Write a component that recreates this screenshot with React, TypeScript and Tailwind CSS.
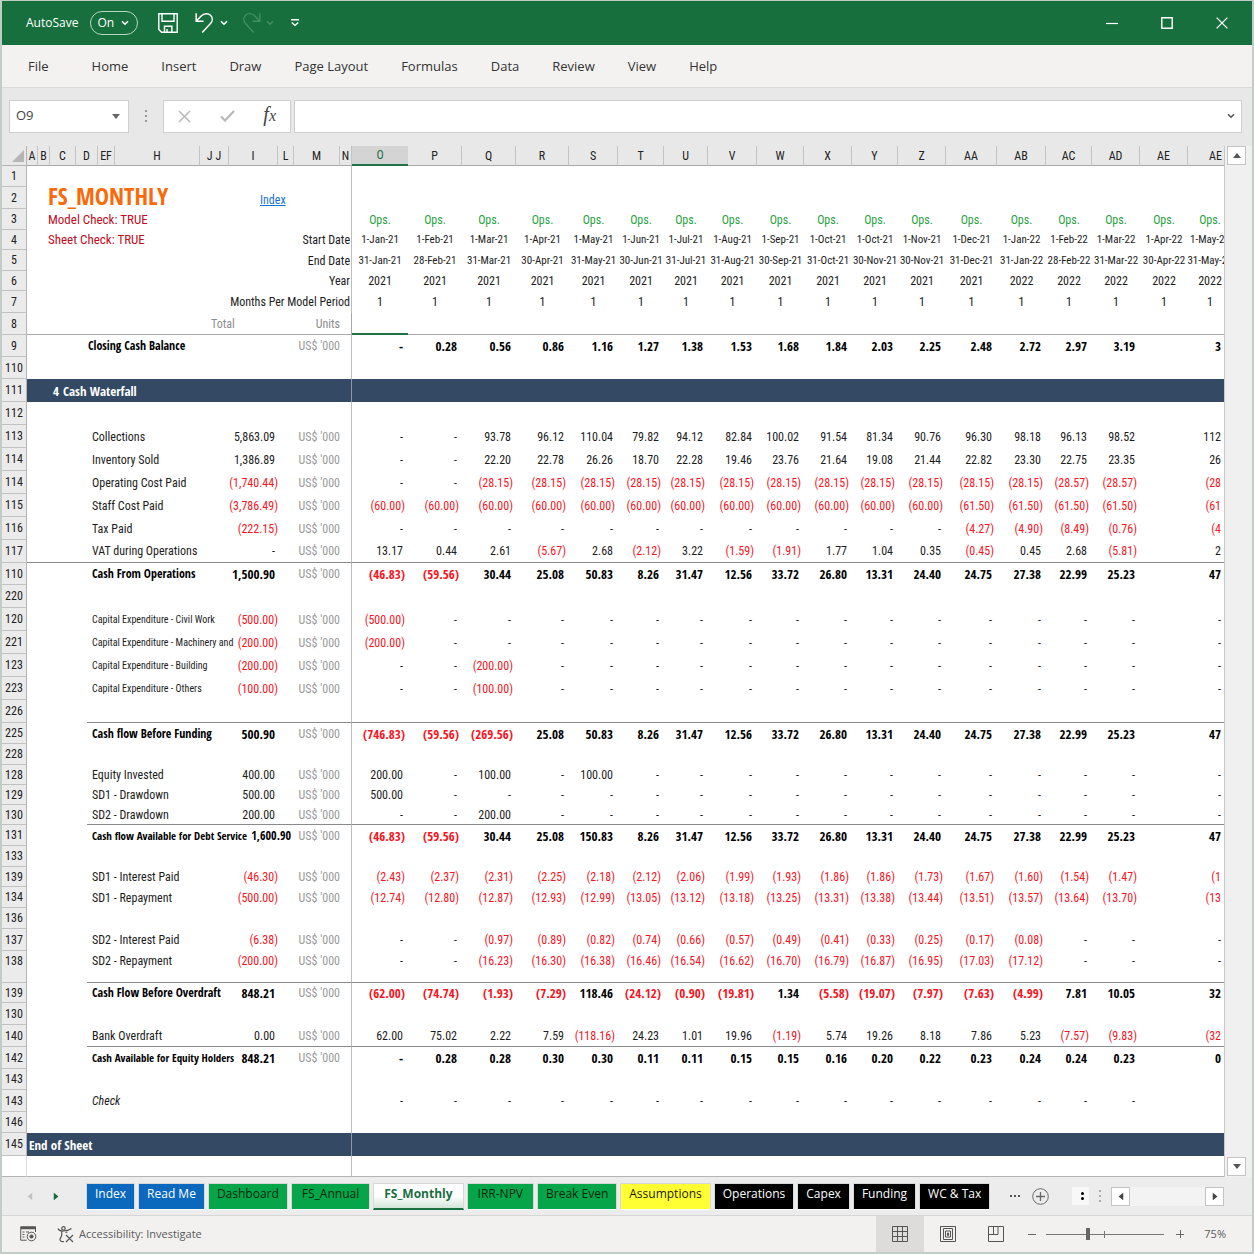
import { Fragment } from "react";

const columns = [
    { name: "A", span: 1 }, { name: "B", span: 1 }, { name: "C", span: 1 }, { name: "D", span: 2 },
    { name: "EF", span: 1 }, { name: "H", span: 1 }, { name: "J J", span: 1 }, { name: "I", span: 1 },
    { name: "L", span: 1 }, { name: "M", span: 1 }, { name: "N", span: 1 },
];

const months = [
    { col: "O", start: "1-Jan-21", end: "31-Jan-21", year: 2021 },
    { col: "P", start: "1-Feb-21", end: "28-Feb-21", year: 2021 },
    { col: "Q", start: "1-Mar-21", end: "31-Mar-21", year: 2021 },
    { col: "R", start: "1-Apr-21", end: "30-Apr-21", year: 2021 },
    { col: "S", start: "1-May-21", end: "31-May-21", year: 2021 },
    { col: "T", start: "1-Jun-21", end: "30-Jun-21", year: 2021 },
    { col: "U", start: "1-Jul-21", end: "31-Jul-21", year: 2021 },
    { col: "V", start: "1-Aug-21", end: "31-Aug-21", year: 2021 },
    { col: "W", start: "1-Sep-21", end: "30-Sep-21", year: 2021 },
    { col: "X", start: "1-Oct-21", end: "31-Oct-21", year: 2021 },
    { col: "Y", start: "1-Oct-21", end: "30-Nov-21", year: 2021 },
    { col: "Z", start: "1-Nov-21", end: "30-Nov-21", year: 2021 },
    { col: "AA", start: "1-Dec-21", end: "31-Dec-21", year: 2021 },
    { col: "AB", start: "1-Jan-22", end: "31-Jan-22", year: 2022 },
    { col: "AC", start: "1-Feb-22", end: "28-Feb-22", year: 2022 },
    { col: "AD", start: "1-Mar-22", end: "31-Mar-22", year: 2022 },
    { col: "AE", start: "1-Apr-22", end: "30-Apr-22", year: 2022 },
    { col: "AE", start: "1-May-22", end: "31-May-22", year: 2022 },
];

// values run from column O, "_" leaves a cell empty
const rows = [
    { n: "9", h: "h-[22px]", label: "Closing Cash Balance", outdent: true, bold: true, values: "- 0.28 0.56 0.86 1.16 1.27 1.38 1.53 1.68 1.84 2.03 2.25 2.48 2.72 2.97 3.19 _ 3" },
    { n: "110", h: "h-[22px]" },
    { n: "111", h: "h-[23px]", band: "Cash Waterfall", no: "4" },
    { n: "112", h: "h-[23px]" },
    { n: "113", h: "h-[23px]", label: "Collections", total: "5,863.09", values: "- - 93.78 96.12 110.04 79.82 94.12 82.84 100.02 91.54 81.34 90.76 96.30 98.18 96.13 98.52 _ 112" },
    { n: "114", h: "h-[23px]", label: "Inventory Sold", total: "1,386.89", values: "- - 22.20 22.78 26.26 18.70 22.28 19.46 23.76 21.64 19.08 21.44 22.82 23.30 22.75 23.35 _ 26" },
    { n: "114", h: "h-[23px]", label: "Operating Cost Paid", total: "(1,740.44)", values: "- - (28.15) (28.15) (28.15) (28.15) (28.15) (28.15) (28.15) (28.15) (28.15) (28.15) (28.15) (28.15) (28.57) (28.57) _ (28" },
    { n: "115", h: "h-[23px]", label: "Staff Cost Paid", total: "(3,786.49)", values: "(60.00) (60.00) (60.00) (60.00) (60.00) (60.00) (60.00) (60.00) (60.00) (60.00) (60.00) (60.00) (61.50) (61.50) (61.50) (61.50) _ (61" },
    { n: "116", h: "h-[23px]", label: "Tax Paid", total: "(222.15)", values: "- - - - - - - - - - - - (4.27) (4.90) (8.49) (0.76) _ (4" },
    { n: "117", h: "h-[23px]", label: "VAT during Operations", total: "-", line: "full", values: "13.17 0.44 2.61 (5.67) 2.68 (2.12) 3.22 (1.59) (1.91) 1.77 1.04 0.35 (0.45) 0.45 2.68 (5.81) _ 2" },
    { n: "110", h: "h-[22px]", label: "Cash From Operations", total: "1,500.90", bold: true, values: "(46.83) (59.56) 30.44 25.08 50.83 8.26 31.47 12.56 33.72 26.80 13.31 24.40 24.75 27.38 22.99 25.23 _ 47" },
    { n: "220", h: "h-[23px]" },
    { n: "120", h: "h-[23px]", label: "Capital Expenditure - Civil Work", small: true, total: "(500.00)", values: "(500.00) - - - - - - - - - - - - - - - _ -" },
    { n: "221", h: "h-[23px]", label: "Capital Expenditure - Machinery and", small: true, total: "(200.00)", values: "(200.00) - - - - - - - - - - - - - - - _ -" },
    { n: "123", h: "h-[23px]", label: "Capital Expenditure - Building", small: true, total: "(200.00)", values: "- - (200.00) - - - - - - - - - - - - - _ -" },
    { n: "223", h: "h-[23px]", label: "Capital Expenditure - Others", small: true, total: "(100.00)", values: "- - (100.00) - - - - - - - - - - - - - _ -" },
    { n: "226", h: "h-[23px]", line: "part" },
    { n: "225", h: "h-[21px]", label: "Cash flow Before Funding", total: "500.90", bold: true, values: "(746.83) (59.56) (269.56) 25.08 50.83 8.26 31.47 12.56 33.72 26.80 13.31 24.40 24.75 27.38 22.99 25.23 _ 47" },
    { n: "228", h: "h-[21px]" },
    { n: "128", h: "h-[20px]", label: "Equity Invested", total: "400.00", values: "200.00 - 100.00 - 100.00 - - - - - - - - - - - _ -" },
    { n: "129", h: "h-[20px]", label: "SD1 - Drawdown", total: "500.00", values: "500.00 - - - - - - - - - - - - - - - _ -" },
    { n: "130", h: "h-[20px]", label: "SD2 - Drawdown", total: "200.00", line: "part", values: "- - 200.00 - - - - - - - - - - - - - _ -" },
    { n: "131", h: "h-[21px]", label: "Cash flow Available for Debt Service", total: "1,600.90", wide: true, small: true, bold: true, values: "(46.83) (59.56) 30.44 25.08 150.83 8.26 31.47 12.56 33.72 26.80 13.31 24.40 24.75 27.38 22.99 25.23 _ 47" },
    { n: "133", h: "h-[21px]" },
    { n: "139", h: "h-[20px]", label: "SD1 - Interest Paid", total: "(46.30)", values: "(2.43) (2.37) (2.31) (2.25) (2.18) (2.12) (2.06) (1.99) (1.93) (1.86) (1.86) (1.73) (1.67) (1.60) (1.54) (1.47) _ (1" },
    { n: "134", h: "h-[21px]", label: "SD1 - Repayment", total: "(500.00)", values: "(12.74) (12.80) (12.87) (12.93) (12.99) (13.05) (13.12) (13.18) (13.25) (13.31) (13.38) (13.44) (13.51) (13.57) (13.64) (13.70) _ (13" },
    { n: "136", h: "h-[21px]" },
    { n: "137", h: "h-[22px]", label: "SD2 - Interest Paid", total: "(6.38)", values: "- - (0.97) (0.89) (0.82) (0.74) (0.66) (0.57) (0.49) (0.41) (0.33) (0.25) (0.17) (0.08) - - _ -" },
    { n: "138", h: "h-[32px]", label: "SD2 - Repayment", total: "(200.00)", tall: true, line: "part", values: "- - (16.23) (16.30) (16.38) (16.46) (16.54) (16.62) (16.70) (16.79) (16.87) (16.95) (17.03) (17.12) - - _ -" },
    { n: "139", h: "h-[20px]", label: "Cash Flow Before Overdraft", total: "848.21", bold: true, values: "(62.00) (74.74) (1.93) (7.29) 118.46 (24.12) (0.90) (19.81) 1.34 (5.58) (19.07) (7.97) (7.63) (4.99) 7.81 10.05 _ 32" },
    { n: "130", h: "h-[22px]" },
    { n: "140", h: "h-[22px]", label: "Bank Overdraft", total: "0.00", line: "part", values: "62.00 75.02 2.22 7.59 (118.16) 24.23 1.01 19.96 (1.19) 5.74 19.26 8.18 7.86 5.23 (7.57) (9.83) _ (32" },
    { n: "142", h: "h-[22px]", label: "Cash Available for Equity Holders", total: "848.21", small: true, bold: true, values: "- 0.28 0.28 0.30 0.30 0.11 0.11 0.15 0.15 0.16 0.20 0.22 0.23 0.24 0.24 0.23 _ 0" },
    { n: "143", h: "h-[21px]" },
    { n: "143", h: "h-[22px]", label: "Check", italic: true, noUnit: true, values: "- - - - - - - - - - - - - - - - _ _" },
    { n: "146", h: "h-[21px]" },
    { n: "145", h: "h-[23px]", band: "End of Sheet" },
];

const tabs = [
    { name: "Index", style: "px-2 bg-[#0a68bd] text-white" },
    { name: "Read Me", style: "px-2 bg-[#0a68bd] text-white" },
    { name: "Dashboard", style: "px-2 bg-[#06a549] text-[#06280f]" },
    { name: "FS_Annual", style: "px-2.5 bg-[#06a549] text-[#06280f]" },
    { name: "FS_Monthly", active: true, style: "px-2.5 bg-linear-to-b from-white from-50% to-[#cfe6d8] text-[#1a6e40] font-bold" },
    { name: "IRR-NPV", style: "px-2.5 bg-[#06a549] text-[#06280f]" },
    { name: "Break Even", style: "px-2 bg-[#06a549] text-[#06280f]" },
    { name: "Assumptions", style: "px-2 bg-[#ffff33] text-[#1c1c08]" },
    { name: "Operations", style: "px-2 bg-black text-white" },
    { name: "Capex", style: "px-2 bg-black text-white" },
    { name: "Funding", style: "px-2 bg-black text-white" },
    { name: "WC & Tax", style: "px-2 bg-black text-white" },
];

const menu = ["File", "Home", "Insert", "Draw", "Page Layout", "Formulas", "Data", "Review", "View", "Help"];

const strong = "font-['Open_Sans_Condensed','Open_Sans',sans-serif] font-bold";

function Chevron({ className = "" }) {
    return (
        <svg viewBox="0 0 8 6" className={`h-[6px] w-2 ${className}`} fill="none" stroke="currentColor" strokeWidth="1.6">
            <path d="M1 1.2 4 4.2 7 1.2" />
        </svg>
    );
}

function Triangle({ className = "" }) {
    return (
        <svg viewBox="0 0 8 5" className={`h-[5px] w-2 ${className}`} fill="currentColor">
            <path d="M0 0h8L4 5z" />
        </svg>
    );
}

function TitleBar() {
    return (
        <header className="flex h-11 items-center bg-[#176f3d] pl-6 text-xs text-white">
            <span>AutoSave</span>
            <button className="ml-3 flex h-6 w-12 items-center justify-between rounded-full border border-[#b9d6c5] pl-1.5 pr-2">
                On <Chevron />
            </button>
            <button aria-label="Save" className="ml-5">
                <svg viewBox="0 0 20 20" className="size-5" fill="none" stroke="currentColor" strokeWidth="1.4">
                    <path d="M.8.8h18.4v18.4H3.6L.8 16.4zM4 .8v7.4h12V.8M6.5 19v-5.8h7.4V19M9 19v-3" />
                </svg>
            </button>
            <button aria-label="Undo" className="ml-4">
                <svg viewBox="0 0 20 22" className="h-[22px] w-5" fill="none" stroke="currentColor" strokeWidth="1.5">
                    <path d="M2.2 1.2v8h7.4M2.4 9 7.2 4c3-3 7-3 9.3-.8 2.3 2.3 2.3 5.8 0 8.3L8.2 20.5" />
                </svg>
            </button>
            <button aria-label="Undo list" className="ml-1.5"><Chevron /></button>
            <button aria-label="Redo" className="ml-3.5 text-[#3f8f62]">
                <svg viewBox="0 0 20 22" className="h-[22px] w-5" fill="none" stroke="currentColor" strokeWidth="1.4">
                    <path d="M17.8 1.2v8h-7.4M17.6 9 12.8 4c-3-3-7-3-9.3-.8-2.3 2.3-2.3 5.8 0 8.3l8.3 9" />
                </svg>
            </button>
            <button aria-label="Redo list" className="ml-1 text-[#3f8f62]"><Chevron /></button>
            <button aria-label="Customize toolbar" className="ml-4">
                <svg viewBox="0 0 10 8" className="h-2 w-[10px]" fill="none" stroke="currentColor" strokeWidth="1.4">
                    <path d="M1 .8h8M1.8 3.4 5 6.4l3.2-3" />
                </svg>
            </button>
            <div className="ml-auto flex items-center gap-[43px] pr-6">
                <button aria-label="Minimize">
                    <svg viewBox="0 0 12 12" className="size-3" fill="none" stroke="currentColor" strokeWidth="1.2"><path d="M0 6.5h12" /></svg>
                </button>
                <button aria-label="Maximize">
                    <svg viewBox="0 0 12 12" className="size-3" fill="none" stroke="currentColor" strokeWidth="1.4"><path d="M.8.8h10.4v10.4H.8z" /></svg>
                </button>
                <button aria-label="Close">
                    <svg viewBox="0 0 12 12" className="size-3" fill="none" stroke="currentColor" strokeWidth="1.3"><path d="m.6.6 10.8 10.8M11.4.6.6 11.4" /></svg>
                </button>
            </div>
        </header>
    );
}

function FormulaBar() {
    return (
        <div className="flex h-[58px] items-center bg-[#e8e8e8] pl-[7px] pr-2.5 pb-0.5">
            <div className="flex h-[33px] w-[120px] items-center border border-[#cfcfcf] bg-white pl-1.5 pr-2 text-[#666]">
                <input aria-label="Name box" defaultValue="O9" className="w-full min-w-0 text-[13px] text-[#444] outline-none" />
                <button aria-label="Names"><Triangle /></button>
            </div>
            <div className="flex w-[34px] flex-col items-center gap-[3px]">
                <i className="size-0.5 bg-[#999]" /><i className="size-0.5 bg-[#999]" /><i className="size-0.5 bg-[#999]" />
            </div>
            <div className="flex h-[33px] w-32 items-center justify-between border border-[#cfcfcf] bg-white px-3.5">
                <button aria-label="Cancel">
                    <svg viewBox="0 0 13 13" className="size-[13px]" fill="none" stroke="#b8b8b8" strokeWidth="1.5"><path d="m1 1 11 11M12 1 1 12" /></svg>
                </button>
                <button aria-label="Enter">
                    <svg viewBox="0 0 15 12" className="h-3 w-[15px]" fill="none" stroke="#b8b8b8" strokeWidth="2.2"><path d="m1 6.5 4 4L14 1" /></svg>
                </button>
                <button aria-label="Insert function" className="font-['Liberation_Serif',serif] text-xl leading-5 text-[#444] italic">
                    f<span className="text-base">x</span>
                </button>
            </div>
            <div className="ml-[3px] flex h-[33px] grow items-center border border-[#cfcfcf] bg-white pl-2 pr-1.5 text-[#555]">
                <input aria-label="Formula" className="w-full min-w-0 text-sm outline-none" />
                <button aria-label="Expand formula bar"><Chevron /></button>
            </div>
        </div>
    );
}

function RowHead({ n, className = "" }) {
    return <th className={`border-r border-b border-r-[#b4b4b4] border-b-[#c2c2c2] bg-[#ebebeb] font-normal text-[#222] ${className}`}>{n}</th>;
}

function MonthCells({ field, className = "" }) {
    return months.map((m, i) => (
        <td key={i} className={`text-center ${i === months.length - 1 ? "overflow-hidden" : ""} ${className}`}>
            <div className={i === months.length - 1 ? "flex w-11 justify-center" : ""}>{m[field] ?? field}</div>
        </td>
    ));
}

function HeadRow({ n, h, label, field, className = "" }) {
    return (
        <tr className={h}>
            <RowHead n={n} />
            <td colSpan={12} className="border-r border-[#bdbdbd] pr-px text-right">{label}</td>
            <MonthCells field={field} className={className} />
        </tr>
    );
}

function DataRow({ row }) {
    if (row.band) {
        return (
            <tr className={row.h}>
                <RowHead n={row.n} />
                <td colSpan={12} className={`border-r border-[#8d99a8] bg-[#334964] text-[13px] text-white ${strong} ${row.no ? "pl-[26px]" : "pl-0.5"}`}>
                    {row.no && <span className="pr-1">{row.no}</span>}{row.band}
                </td>
                <td colSpan={18} className="bg-[#334964]" />
            </tr>
        );
    }
    const line = row.line ? "border-b border-b-[#8a8a8a]" : "";
    const lead = row.line === "full" ? line : "";
    const values = row.values ? row.values.split(" ") : Array(18).fill("_");
    const look = `${line} ${row.tall ? "align-top pt-0.5" : ""}`;
    const weight = row.bold ? `text-black ${strong}` : "";
    const size = row.small ? (row.bold ? "text-[11px]" : "text-[10px]") : "";
    const figure = row.bold ? "text-[13px]" : "";
    const color = (v) => (v?.startsWith("(") ? "text-[#f5141e]" : row.bold ? "text-black" : "");
    const face = row.bold ? strong : "";
    return (
        <tr className={row.h}>
            <RowHead n={row.n} className={row.tall ? "pt-0.5 align-top" : ""} />
            <td colSpan={4} className={lead} />
            <td colSpan={4} className={`${look} ${weight} ${row.outdent ? "pl-px" : "pl-[5px]"} ${row.italic ? "italic" : ""} ${size}`}>{row.label}</td>
            <td colSpan={row.wide ? 2 : 1} className={`${look} ${face} ${row.wide ? "text-[12px]" : figure} text-right ${color(row.total)} ${row.total?.startsWith("(") ? "" : "pr-[3px]"}`}>{row.total}</td>
            {!row.wide && <td className={look} />}
            <td className={`${look} text-right text-[#999]`}>{row.label && !row.noUnit ? "US$ '000" : ""}</td>
            <td className={`${look} border-r border-r-[#bdbdbd]`} />
            {values.map((v, i) => (
                <td key={i} className={`${look} ${face} ${figure} text-right ${color(v)} ${i === 17 ? "pr-[3px]" : v.startsWith("(") ? "pr-[3px]" : "pr-[5px]"}`}>
                    {v === "_" ? "" : v}
                </td>
            ))}
        </tr>
    );
}

function Sheet() {
    return (
        <table className="w-full table-fixed border-separate border-spacing-0 bg-white font-['Roboto_Condensed',Lato,sans-serif] text-[12px] leading-4 whitespace-nowrap text-[#1c1c1c]">
            <colgroup>
                <col className="w-[25px]" />
                <col className="w-[11px]" /><col className="w-[12px]" /><col className="w-[26px]" /><col className="w-[11px]" /><col className="w-[11px]" />
                <col className="w-[17px]" /><col className="w-[85px]" /><col className="w-[29px]" /><col className="w-[49px]" /><col className="w-[16px]" />
                <col className="w-[46px]" /><col className="w-[12px]" />
                <col className="w-[56px]" /><col className="w-[54px]" /><col className="w-[54px]" /><col className="w-[53px]" />
                <col className="w-[49px]" /><col className="w-[46px]" /><col className="w-[44px]" /><col className="w-[49px]" />
                <col className="w-[47px]" /><col className="w-[48px]" /><col className="w-[46px]" /><col className="w-[48px]" />
                <col className="w-[51px]" /><col className="w-[49px]" /><col className="w-[46px]" /><col className="w-[48px]" />
                <col className="w-[48px]" /><col />
            </colgroup>
            <thead>
                <tr className="h-[20px] bg-[#e8e8e8] text-[#222]">
                    <th className="border-r border-b border-[#b4b4b4] pr-0.5">
                        <svg viewBox="0 0 12 12" className="ml-auto size-3" fill="#b5b5b5"><path d="M12 0v12H0z" /></svg>
                    </th>
                    {columns.map((c, i) => (
                        <th key={i} colSpan={c.span} className="border-r border-b border-r-[#c4c4c4] border-b-[#a8a8a8] font-normal">{c.name}</th>
                    ))}
                    {months.map((m, i) => (
                        <th
                            key={i}
                            className={
                                m.col === "O"
                                    ? "border-b-2 border-[#1f7246] bg-[#d4d4d4] font-normal text-[#1f7246]"
                                    : i === months.length - 1
                                    ? "border-b border-b-[#a8a8a8] pr-0.5 text-right font-normal"
                                    : "border-r border-b border-r-[#c4c4c4] border-b-[#a8a8a8] font-normal"
                            }
                        >
                            {m.col}
                        </th>
                    ))}
                </tr>
            </thead>
            <tbody>
                <tr className="h-[21px]"><RowHead n="1" /><td colSpan={12} className="border-r border-[#bdbdbd]" /><td colSpan={18} /></tr>
                <tr className="h-[22px]">
                    <RowHead n="2" />
                    <td colSpan={8} className={`pb-1 pl-[21px] text-[24px] leading-[18px] text-[#fa6a0a] ${strong}`}>FS_MONTHLY</td>
                    <td colSpan={4} className="border-r border-[#bdbdbd] pt-1 pl-[31px]"><a href="#index" className="text-[#1873cf] underline">Index</a></td>
                    <td colSpan={18} />
                </tr>
                <tr className="h-[21px]">
                    <RowHead n="3" />
                    <td colSpan={12} className="border-r border-[#bdbdbd] pl-[21px] text-[13px] text-[#c00d1e]">Model Check: TRUE</td>
                    <MonthCells field="Ops." className="text-[#27a343]" />
                </tr>
                <tr className="h-[20px]">
                    <RowHead n="4" />
                    <td colSpan={8} className="pl-[21px] text-[13px] text-[#c00d1e]">Sheet Check: TRUE</td>
                    <td colSpan={4} className="border-r border-[#bdbdbd] pr-px text-right">Start Date</td>
                    <MonthCells field="start" className="text-[11px]" />
                </tr>
                <HeadRow n="5" h="h-[21px]" label="End Date" field="end" className="text-[11px]" />
                <HeadRow n="6" h="h-[20px]" label="Year" field="year" />
                <HeadRow n="7" h="h-[22px]" label="Months Per Model Period" field="1" />
                <tr className="h-[22px] text-[#8c8c8c]">
                    <RowHead n="8" />
                    <td colSpan={9} className="border-b border-[#a8a8a8] pl-[184px]">Total</td>
                    <td colSpan={2} className="border-b border-[#a8a8a8] text-right">Units</td>
                    <td className="border-r border-b border-[#a8a8a8]" />
                    <td className="border-b-2 border-[#1f7246]" />
                    <td colSpan={17} className="border-b border-[#a8a8a8]" />
                </tr>
                {rows.map((row, i) => (
                    <Fragment key={i}><DataRow row={row} /></Fragment>
                ))}
                <tr className="h-[21px]">
                    <th className="border-r border-b border-r-[#dcdcdc] border-b-[#b4b4b4]" />
                    <td colSpan={12} className="border-r border-b border-r-[#bdbdbd] border-b-[#b4b4b4]" />
                    <td colSpan={18} className="border-b border-[#b4b4b4]" />
                </tr>
            </tbody>
        </table>
    );
}

function SheetTabs() {
    return (
        <nav className="flex h-[38px] items-center bg-[#ececec] text-xs">
            <button aria-label="Previous sheet" className="ml-6 text-[#c2c2c2]"><Triangle className="rotate-90" /></button>
            <button aria-label="Next sheet" className="ml-[18px] text-[#176f3d]"><Triangle className="-rotate-90" /></button>
            <div className="ml-[26px] flex gap-[3px]">
                {tabs.map((t) => (
                    <button
                        key={t.name}
                        className={`h-[27px] border border-[#d8d8d8] pb-1 leading-5 whitespace-nowrap ${t.active ? "border-b-2 border-b-[#176f3d]" : "border-b-white"} ${t.style}`}
                    >
                        {t.name}
                    </button>
                ))}
            </div>
            <button aria-label="More sheets" className="ml-5 flex gap-0.5">
                <i className="size-0.5 bg-[#555]" /><i className="size-0.5 bg-[#555]" /><i className="size-0.5 bg-[#555]" />
            </button>
            <button aria-label="New sheet" className="ml-3">
                <svg viewBox="0 0 17 17" className="size-[17px]" fill="none" stroke="#6a6a6a"><circle cx="8.5" cy="8.5" r="7.8" /><path d="M8.5 4v9M4 8.5h9" strokeWidth="1.3" /></svg>
            </button>
            <div className="ml-auto flex items-center">
                <div className="flex h-[18px] w-[17px] flex-col items-center justify-center gap-0.5 bg-[#f8f8f8] pl-1">
                    <i className="size-[3px] rounded-full bg-black" /><i className="size-[3px] rounded-full bg-black" />
                </div>
                <div className="mx-2.5 flex flex-col gap-[3px]">
                    <i className="size-0.5 bg-[#aaa]" /><i className="size-0.5 bg-[#aaa]" /><i className="size-0.5 bg-[#aaa]" />
                </div>
                <div className="mr-7 flex bg-[#f3f3f3]">
                    <button aria-label="Scroll left" className="flex size-[19px] items-center justify-center border border-[#c4c4c4] bg-white text-[#444]"><Triangle className="rotate-90" /></button>
                    <span className="w-[75px]" />
                    <button aria-label="Scroll right" className="flex size-[19px] items-center justify-center border border-[#c4c4c4] bg-white text-[#444]"><Triangle className="-rotate-90" /></button>
                </div>
            </div>
        </nav>
    );
}

function StatusBar() {
    return (
        <footer className="flex h-[37px] items-center border-t border-[#d6d6d6] bg-[#f2f1f0] text-[11px] text-[#5a5a5a]">
            <button aria-label="Record macro" className="ml-[18px]">
                <svg viewBox="0 0 17 16" className="h-4 w-[17px]" fill="none" stroke="#555">
                    <path d="M15.5 6V.8H.7v13.4h6" /><path d="M1 2h15" strokeWidth="2.5" />
                    <path d="M2.5 6h2M2.5 8.5h2M2.5 11h2M6 6h3" /><circle cx="11.5" cy="10.5" r="4.3" /><circle cx="11.5" cy="10.5" r="1.6" fill="#555" />
                </svg>
            </button>
            <button className="ml-5 flex items-center gap-[5px]">
                <svg viewBox="0 0 17 17" className="size-[17px]" fill="none" stroke="#555" strokeWidth="1.2">
                    <circle cx="6.5" cy="2.4" r="1.7" /><path d="M1 2.5c1 2.5 3 2.7 5.5 2.5 3 0 5-.5 8-2.5M4.7 5v4c0 2-1.7 3-1.7 4.5s1.5 2.5 4 2M9 9l7 7M16 9l-7 7M8.5 6.5l2-.5" />
                </svg>
                Accessibility: Investigate
            </button>
            <div className="ml-auto flex items-center self-stretch">
                <button aria-label="Normal view" className="flex w-12 items-center justify-center self-stretch bg-[#dddcdb]">
                    <svg viewBox="0 0 16 16" className="size-4" fill="none" stroke="#555"><path d="M.5.5h15v15H.5zM5.5.5v15M10.5.5v15M.5 5.5h15M.5 10.5h15" /></svg>
                </button>
                <button aria-label="Page layout view" className="flex w-12 justify-center">
                    <svg viewBox="0 0 16 16" className="size-4" fill="none" stroke="#555"><path d="M.5.5h15v15H.5zM3.5 2.5h9v11h-9zM5.5 5h5v6h-5zM7.5 7v2.5h1V7z" /></svg>
                </button>
                <button aria-label="Page break view" className="flex w-12 justify-center">
                    <svg viewBox="0 0 16 16" className="size-4" fill="none" stroke="#555"><path d="M.5.5h15v15H.5zM.5 8.5h9.5v-8M5.5.5v8" /></svg>
                </button>
                <button aria-label="Zoom out" className="ml-1 flex w-4 justify-center">
                    <svg viewBox="0 0 8 8" className="size-2" stroke="#666"><path d="M0 4.5h8" /></svg>
                </button>
                <svg viewBox="0 0 118 12" className="mx-1.5 h-3 w-[118px]" stroke="#777">
                    <path d="M0 6.5h118M58.5 3v7" /><path d="M40 0h4v12h-4z" fill="#666" stroke="none" />
                </svg>
                <button aria-label="Zoom in" className="ml-0.5 flex w-4 justify-center">
                    <svg viewBox="0 0 8 8" className="size-2" stroke="#666"><path d="M0 4.5h8M4.5 0v8" /></svg>
                </button>
                <button className="mr-[26px] ml-4">75%</button>
            </div>
        </footer>
    );
}

export default function App() {
    return (
        <div className="flex min-h-screen flex-col border-2 border-t border-[#c3cdc7] bg-[#e8e8e8] font-['Open_Sans',sans-serif]">
            <TitleBar />
            <nav className="flex h-[43px] items-center gap-px border-b border-[#dadada] bg-[#f3f2f1] pt-0.5 pl-2.5 text-[13px] text-[#333]">
                {menu.map((m) => (
                    <button key={m} className={m === "File" ? "mr-2.5 px-4" : "px-4"}>{m}</button>
                ))}
            </nav>
            <FormulaBar />
            <main className="flex">
                <div className="min-w-0 grow overflow-hidden">
                    <Sheet />
                </div>
                <div className="flex w-7 shrink-0 flex-col items-center justify-between border-l border-[#c8c8c8] bg-[#f0f0f0] pr-1 pb-px">
                    <button aria-label="Scroll up" className="flex size-[19px] items-center justify-center border border-[#c4c4c4] bg-white text-[#555]"><Triangle className="rotate-180" /></button>
                    <button aria-label="Scroll down" className="flex size-[19px] items-center justify-center border border-[#c4c4c4] bg-white text-[#555]"><Triangle /></button>
                </div>
            </main>
            <SheetTabs />
            <StatusBar />
        </div>
    );
}
